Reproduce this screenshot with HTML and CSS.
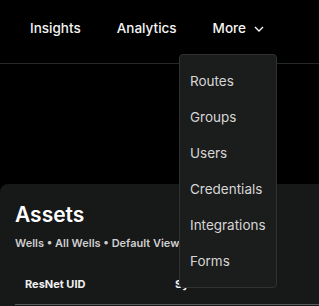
FILE: index.html
```html
<!DOCTYPE html>
<html lang="en">
<head>
    <meta charset="UTF-8">
    <meta name="viewport" content="width=device-width, initial-scale=1.0">
    <title>Assets</title>
    <link rel="stylesheet" href="styles.css">
</head>
<body>
    <header class="topbar">
        <nav class="nav">
            <a class="nav-item">Insights</a>
            <a class="nav-item">Analytics</a>
            <a class="nav-item more">More
                <svg class="chevron" width="10" height="6" viewBox="0 0 10 6"><path d="M1 1l4 4 4-4" fill="none" stroke="#fff" stroke-width="1.3"/></svg>
            </a>
        </nav>
    </header>

    <ul class="menu">
        <li>Routes</li>
        <li>Groups</li>
        <li>Users</li>
        <li>Credentials</li>
        <li>Integrations</li>
        <li>Forms</li>
    </ul>

    <main class="card">
        <h1>Assets</h1>
        <p class="crumbs">Wells • All Wells • Default View</p>
        <div class="table-head">
            <span class="col col-uid">ResNet UID</span>
            <span class="col">System UID</span>
        </div>
    </main>
</body>
</html>
```

FILE: styles.css
```css
body {
    margin: 0;
    height: 306px;
    background-color: #000;
    font-family: "Inter", "Noto Sans", sans-serif;
    color: #fff;
    overflow: hidden;
}
.topbar {
    height: 63px;
    border-bottom: 1px solid #262727;
}
.nav {
    display: flex;
    align-items: center;
    height: 55px;
    padding-left: 30px;
    gap: 36px;
}
.nav-item {
    font-size: 13.5px;
    font-weight: 500;
    color: #f4f4f4;
}
.more {
    display: flex;
    align-items: center;
    gap: 8px;
}
.chevron {
    margin-top: 2px;
}
.menu {
    position: absolute;
    top: 54px;
    left: 179px;
    width: 98px;
    margin: 0;
    padding: 8px 0 8px 10px;
    list-style: none;
    background-color: #1b1c1c;
    border: 1px solid #303131;
    border-radius: 4px;
    box-sizing: border-box;
    height: 234px;
    z-index: 2;
}
.menu li {
    height: 36px;
    line-height: 36px;
    font-size: 13.5px;
    color: #d6d6d6;
}
.card {
    margin-top: 120px;
    height: 122px;
    background-color: #171818;
    border-radius: 8px 0 0 0;
    padding: 18px 0 0 15px;
    box-sizing: border-box;
}
h1 {
    margin: 0;
    font-size: 21px;
    font-weight: 600;
    line-height: 26px;
}
.crumbs {
    margin: 8px 0 0;
    font-size: 11px;
    font-weight: 600;
    color: #cfcfcf;
}
.table-head {
    display: flex;
    margin-top: 27px;
    padding-bottom: 13px;
    border-bottom: 1px solid #5a5a5a;
}
.col {
    font-size: 11px;
    font-weight: 700;
    color: #f0f0f0;
}
.col-uid {
    width: 150px;
    padding-left: 10px;
}
```
